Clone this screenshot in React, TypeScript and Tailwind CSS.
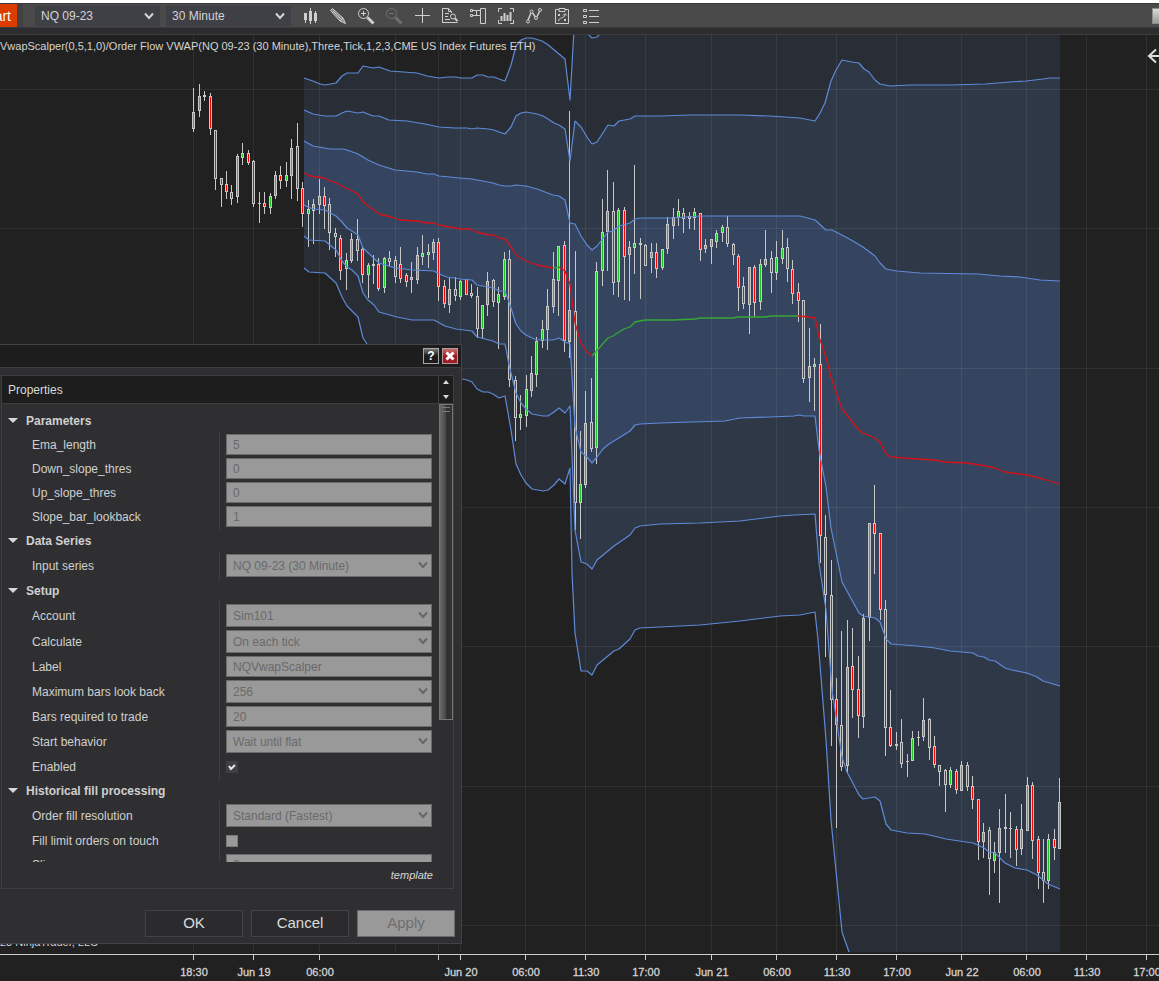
import React, { useState } from "react";

type Point = [number, number];
// high, low, body top, body bottom, rising (1) or falling (0)
type Candle = [number, number, number, number, 0 | 1];

const CANDLES: Candle[] = [
  [88, 132, 112, 129, 1], [84, 117, 96, 111, 1], [91, 101, 95, 97, 1], [93, 135, 96, 129, 0], [130, 190, 130, 179, 0],
  [178, 207, 178, 185, 0], [171, 199, 184, 192, 0], [185, 205, 192, 199, 0], [154, 203, 156, 197, 1], [143, 165, 153, 158, 1],
  [150, 165, 153, 163, 0], [160, 207, 161, 204, 0], [192, 223, 203, 204, 0], [192, 214, 203, 207, 0], [193, 214, 196, 208, 1],
  [171, 199, 175, 196, 1], [166, 189, 175, 181, 0], [162, 187, 175, 181, 1], [139, 199, 148, 176, 1], [123, 201, 146, 189, 0],
  [182, 227, 188, 214, 0], [200, 247, 209, 214, 1], [199, 244, 204, 211, 1], [179, 214, 196, 205, 1], [187, 229, 196, 206, 0],
  [198, 250, 204, 233, 0], [228, 257, 233, 237, 0], [235, 280, 238, 271, 0], [253, 290, 260, 269, 1], [233, 263, 239, 261, 1],
  [219, 261, 239, 251, 0], [247, 283, 249, 275, 0], [263, 298, 265, 275, 1], [255, 284, 264, 266, 1], [258, 291, 264, 289, 0],
  [257, 293, 258, 288, 1], [251, 266, 258, 262, 0], [256, 283, 260, 277, 0], [247, 283, 264, 279, 0], [273, 287, 275, 282, 0],
  [262, 293, 277, 280, 1], [247, 284, 255, 280, 1], [235, 265, 253, 257, 1], [244, 268, 252, 255, 1], [239, 260, 242, 253, 1],
  [238, 301, 242, 287, 0], [280, 308, 286, 304, 0], [277, 313, 289, 305, 1], [277, 301, 289, 296, 0], [280, 300, 281, 297, 1],
  [279, 295, 279, 295, 0], [284, 298, 293, 296, 0], [287, 338, 296, 329, 0], [305, 338, 305, 329, 1], [272, 316, 281, 305, 1],
  [279, 307, 280, 302, 0], [287, 349, 294, 303, 1], [252, 300, 259, 297, 1], [250, 387, 259, 380, 0], [376, 441, 380, 418, 0],
  [395, 430, 414, 418, 1], [375, 427, 389, 416, 1], [356, 397, 373, 391, 1], [337, 387, 341, 375, 1], [320, 348, 329, 341, 1],
  [289, 350, 306, 330, 1], [252, 313, 279, 307, 1], [246, 316, 246, 281, 1], [241, 352, 245, 341, 0], [111, 358, 310, 342, 1],
  [251, 530, 311, 503, 0], [431, 539, 484, 503, 1], [391, 488, 423, 485, 1], [378, 452, 422, 449, 0], [262, 464, 271, 448, 1],
  [199, 286, 232, 271, 1], [170, 271, 211, 232, 1], [182, 295, 211, 283, 0], [208, 297, 210, 282, 1], [207, 300, 210, 257, 0],
  [241, 301, 247, 255, 1], [165, 274, 243, 248, 1], [238, 299, 243, 245, 1], [244, 266, 245, 266, 0], [243, 273, 252, 258, 1],
  [243, 278, 252, 269, 0], [249, 270, 249, 268, 1], [217, 254, 224, 249, 1], [208, 239, 217, 226, 1], [199, 226, 211, 218, 1],
  [208, 233, 213, 219, 0], [212, 229, 216, 219, 1], [208, 230, 212, 218, 1], [213, 261, 213, 250, 0], [239, 253, 245, 249, 1],
  [239, 264, 239, 247, 1], [230, 248, 233, 242, 1], [225, 242, 227, 233, 1], [216, 247, 227, 244, 0], [243, 265, 244, 255, 0],
  [254, 311, 256, 288, 0], [277, 309, 286, 304, 0], [267, 334, 267, 305, 1], [265, 317, 267, 303, 0], [259, 310, 264, 302, 1],
  [230, 267, 259, 265, 1], [251, 293, 258, 273, 0], [241, 280, 257, 273, 1], [230, 264, 248, 259, 1], [238, 282, 247, 269, 0],
  [260, 304, 269, 294, 0], [283, 322, 292, 301, 0], [300, 383, 300, 379, 0], [328, 402, 366, 378, 1], [358, 411, 364, 367, 1],
  [324, 563, 364, 536, 0], [515, 657, 537, 595, 0], [560, 746, 595, 700, 0], [678, 828, 699, 725, 0], [631, 771, 725, 767, 0],
  [620, 773, 667, 766, 1], [628, 718, 666, 690, 0], [656, 738, 689, 716, 0], [614, 728, 618, 717, 1], [523, 641, 523, 618, 1],
  [485, 574, 523, 534, 0], [533, 620, 533, 610, 0], [600, 756, 609, 728, 0], [690, 747, 727, 746, 0], [732, 750, 744, 746, 0],
  [719, 768, 742, 764, 0], [754, 777, 761, 762, 0], [731, 761, 738, 761, 1], [731, 746, 737, 738, 1], [698, 741, 720, 737, 1],
  [718, 760, 719, 748, 0], [736, 768, 746, 765, 0], [765, 786, 765, 772, 0], [769, 812, 770, 785, 0], [767, 788, 770, 785, 1],
  [769, 794, 771, 790, 0], [761, 791, 765, 791, 1], [762, 791, 765, 787, 0], [776, 809, 786, 800, 0], [799, 860, 799, 842, 0],
  [823, 858, 832, 842, 1], [827, 895, 830, 859, 0], [842, 873, 852, 861, 1], [809, 903, 828, 853, 1], [794, 853, 827, 829, 1],
  [812, 858, 828, 829, 0], [826, 866, 829, 850, 0], [804, 855, 829, 849, 1], [777, 831, 785, 831, 1], [782, 859, 785, 841, 0],
  [836, 889, 839, 873, 0], [839, 903, 872, 881, 0], [834, 889, 839, 881, 1], [829, 860, 839, 848, 0], [778, 849, 802, 849, 1],
];

const UPPER3: Point[] = [
  [304, 78], [313, 81], [320, 84], [325, 85], [336, 83], [342, 76], [347, 73], [358, 73], [363, 66], [373, 68], [379, 67], [390, 71], [417, 73],
  [427, 76], [439, 78], [448, 77], [456, 77], [461, 78], [472, 78], [477, 75], [483, 75], [488, 77], [494, 77], [499, 79], [505, 81], [511, 65],
  [516, 46], [521, 40], [526, 38], [532, 38], [542, 41], [547, 44], [565, 59], [570, 100], [574, 30], [576, 10], [585, 30], [589, 35], [592, 38],
  [597, 37], [601, 33], [640, 15], [815, 15], [841, -200], [1060, -200],
];
const UPPER2: Point[] = [
  [304, 110], [313, 114], [325, 116], [336, 116], [342, 113], [347, 111], [358, 113], [363, 112], [373, 116], [379, 116], [389, 120], [407, 121],
  [425, 124], [439, 127], [455, 128], [467, 128], [472, 129], [477, 128], [488, 129], [494, 130], [499, 132], [505, 134], [511, 127], [516, 116],
  [521, 113], [526, 112], [537, 114], [543, 116], [548, 119], [554, 123], [559, 125], [565, 129], [570, 161], [575, 121], [581, 127], [587, 137],
  [592, 144], [597, 142], [608, 125], [614, 126], [619, 121], [630, 119], [635, 116], [660, 116], [690, 115], [740, 115], [770, 116], [800, 118],
  [815, 121], [820, 113], [825, 103], [831, 81], [836, 70], [842, 60], [852, 62], [859, 63], [864, 69], [869, 72], [875, 80], [880, 84], [890, 86],
  [910, 85], [950, 85], [985, 84], [1010, 82], [1026, 81], [1043, 79], [1050, 78], [1060, 78],
];
const UPPER1: Point[] = [
  [304, 141], [313, 146], [330, 149], [343, 149], [347, 150], [358, 154], [368, 160], [379, 165], [395, 170], [417, 172], [427, 174], [434, 174],
  [439, 176], [460, 178], [472, 179], [493, 183], [499, 185], [505, 186], [511, 186], [516, 185], [526, 186], [537, 189], [553, 195], [559, 196],
  [565, 200], [570, 223], [575, 224], [581, 236], [587, 245], [592, 250], [597, 246], [608, 232], [613, 231], [619, 226], [630, 223], [635, 219],
  [640, 218], [672, 218], [700, 216], [800, 216], [815, 220], [826, 230], [832, 230], [840, 234], [853, 241], [863, 247], [875, 256], [880, 263],
  [886, 269], [897, 271], [920, 273], [978, 274], [1000, 276], [1020, 277], [1040, 280], [1060, 281],
];
const LOWER1: Point[] = [
  [304, 205], [308, 207], [313, 209], [325, 210], [336, 216], [342, 222], [347, 228], [358, 235], [363, 248], [379, 263], [395, 268], [413, 270],
  [434, 271], [439, 274], [447, 277], [460, 279], [472, 280], [477, 285], [493, 288], [499, 291], [505, 291], [511, 308], [516, 324], [521, 331],
  [526, 335], [532, 338], [537, 340], [553, 340], [559, 338], [565, 342], [570, 344], [575, 427], [581, 452], [587, 457], [592, 463], [597, 457],
  [603, 449], [609, 444], [622, 436], [630, 431], [635, 425], [640, 424], [660, 423], [725, 421], [740, 418], [770, 417], [794, 416], [799, 415],
  [804, 416], [815, 416], [819, 450], [826, 487], [831, 528], [842, 582], [859, 613], [863, 616], [875, 618], [880, 622], [886, 639], [891, 644],
  [917, 646], [935, 648], [950, 651], [973, 653], [978, 656], [984, 657], [989, 660], [995, 661], [1005, 668], [1012, 670], [1027, 673],
  [1037, 677], [1043, 681], [1060, 686],
];
const LOWER2: Point[] = [
  [304, 236], [309, 240], [325, 241], [336, 250], [342, 261], [347, 267], [352, 270], [358, 276], [363, 293], [368, 300], [374, 305], [379, 312],
  [397, 317], [412, 320], [434, 320], [445, 326], [456, 329], [472, 331], [477, 337], [493, 341], [499, 344], [505, 344], [509, 365], [516, 393],
  [521, 403], [526, 409], [532, 414], [543, 416], [548, 416], [554, 412], [559, 408], [565, 413], [570, 406], [575, 530], [581, 562], [587, 564],
  [592, 569], [597, 560], [614, 546], [630, 535], [635, 528], [640, 526], [660, 524], [700, 523], [740, 521], [780, 516], [795, 515], [815, 514],
  [819, 563], [826, 610], [832, 690], [842, 757], [847, 772], [859, 795], [863, 799], [875, 797], [880, 801], [886, 824], [891, 830], [907, 833],
  [925, 834], [938, 837], [946, 839], [973, 843], [984, 848], [989, 852], [995, 853], [1005, 863], [1015, 868], [1027, 870], [1037, 875],
  [1048, 884], [1060, 889],
];
const LOWER3: Point[] = [
  [304, 268], [309, 272], [325, 273], [336, 283], [342, 297], [347, 306], [358, 317], [363, 338], [367, 344], [379, 360], [412, 370], [440, 371],
  [462, 379], [467, 380], [472, 382], [477, 389], [483, 392], [488, 392], [493, 394], [499, 398], [505, 396], [511, 430], [516, 464], [521, 475],
  [526, 483], [532, 489], [543, 491], [548, 490], [554, 485], [559, 479], [565, 484], [570, 468], [572, 573], [575, 633], [581, 671], [587, 671],
  [592, 675], [597, 665], [614, 651], [619, 649], [630, 639], [635, 630], [640, 628], [660, 627], [700, 625], [740, 621], [780, 616], [800, 615],
  [815, 612], [818, 640], [826, 740], [831, 820], [842, 932], [849, 952], [860, 990], [1060, 1090],
];

const VWAP_FALL1: Point[] = [
  [304, 173], [310, 176], [324, 178], [336, 183], [342, 186], [352, 191], [358, 194], [363, 202], [368, 206], [374, 210], [379, 214], [391, 217],
  [400, 220], [417, 221], [427, 223], [434, 223], [439, 225], [460, 229], [470, 229], [477, 232], [488, 235], [494, 235], [499, 238], [505, 239],
  [511, 247], [516, 255], [526, 261], [537, 265], [553, 268],
];
const VWAP_FLAT: Point[] = [[553, 268], [559, 267]];
const VWAP_FALL2: Point[] = [[559, 267], [565, 271], [570, 284], [575, 323], [581, 343], [587, 352], [592, 356]];
const VWAP_RISE: Point[] = [
  [592, 356], [608, 338], [613, 336], [619, 332], [624, 329], [630, 327], [635, 322], [645, 320], [673, 320], [695, 319], [700, 318], [733, 318],
  [738, 317], [765, 317], [771, 316], [798, 316],
];
const VWAP_FALL3: Point[] = [
  [798, 316], [809, 317], [815, 318], [819, 337], [826, 357], [831, 377], [842, 409], [859, 430], [863, 433], [875, 438], [880, 442], [886, 454],
  [891, 457], [917, 459], [935, 460], [945, 462], [967, 463], [980, 465], [995, 468], [1005, 472], [1027, 475], [1043, 479], [1060, 484],
];

const V_LINES = [193, 253, 319, 395, 438, 460, 525, 585, 645, 711, 776, 836, 896, 961, 1026, 1086, 1146];
const H_LINES = [89, 228, 368, 507, 646, 786, 925];

const TIME_LABELS: [number, string][] = [
  [194, "18:30"], [254, "Jun 19"], [320, "06:00"], [461, "Jun 20"], [526, "06:00"], [586, "11:30"], [646, "17:00"], [712, "Jun 21"],
  [777, "06:00"], [837, "11:30"], [897, "17:00"], [962, "Jun 22"], [1027, "06:00"], [1087, "11:30"], [1147, "17:00"],
];

const toPoints = (pts: Point[]) => pts.map((p) => p.join(",")).join(" ");
const bandPoints = (upper: Point[], lower: Point[]) => toPoints([...upper, ...[...lower].reverse()]);
const candleX = (index: number) => Math.round(193.3 + index * 5.4466);

const PriceChart = () => (
  <svg viewBox="0 35 1159 946" className="block h-auto w-full" role="img" aria-label="NQ 09-23 price chart">
    <defs>
      <clipPath id="plot">
        <rect x="0" y="35" width="1159" height="917" />
      </clipPath>
    </defs>
    <rect x="0" y="35" width="1159" height="946" fill="#212121" />
    <g clipPath="url(#plot)">
      <polygon points={bandPoints(UPPER3, LOWER3)} fill="#292d35" />
      <polygon points={bandPoints(UPPER2, LOWER2)} fill="#2f3847" />
      <polygon points={bandPoints(UPPER1, LOWER1)} fill="#35455f" />
      <g fill="#ffffff" fillOpacity="0.07" shapeRendering="crispEdges">
        {V_LINES.map((x) => (
          <rect key={x} x={x} y="35" width="1" height="917" />
        ))}
        {H_LINES.map((y) => (
          <rect key={y} x="0" y={y} width="1159" height="1" />
        ))}
      </g>
      <g shapeRendering="crispEdges">
        {CANDLES.map(([high, low, top, bottom, up], i) => {
          const x = candleX(i);
          return (
            <g key={i}>
              <rect x={x} y={high} width="1" height={low - high} fill="#c8c8c8" />
              <rect x={x - 1} y={top} width="3" height={bottom - top} fill="#c8c8c8" />
              {bottom - top > 2 && (
                <rect x={x} y={top + 1} width="1" height={bottom - top - 2} fill={up ? "#1fc41f" : "#ff0000"} />
              )}
            </g>
          );
        })}
      </g>
      <g fill="none" stroke="#5f8ad8" strokeWidth="1.2" strokeLinejoin="round">
        {[UPPER3, UPPER2, UPPER1, LOWER1, LOWER2, LOWER3].map((line, i) => (
          <polyline key={i} points={toPoints(line)} />
        ))}
      </g>
      <g fill="none" strokeWidth="1.3" strokeLinejoin="round">
        {[VWAP_FALL1, VWAP_FALL2, VWAP_FALL3].map((line, i) => (
          <polyline key={i} points={toPoints(line)} stroke="#d41218" />
        ))}
        <polyline points={toPoints(VWAP_FLAT)} stroke="#36a836" />
        <polyline points={toPoints(VWAP_RISE)} stroke="#36a836" />
      </g>
    </g>
    <g fill="#d0d0d0" shapeRendering="crispEdges">
      <rect x="0" y="954" width="1159" height="1" />
      {V_LINES.filter((x) => x !== 395).map((x) => (
        <rect key={x} x={x} y="955" width="1" height="5" />
      ))}
    </g>
    <g fill="#d4d4d4" fontFamily="'Liberation Sans', Arial, sans-serif" fontSize="11">
      <text x="0" y="50">
        VwapScalper(0,5,1,0)/Order Flow VWAP(NQ 09-23 (30 Minute),Three,Tick,1,2,3,CME US Index Futures ETH)
      </text>
      <text x="0" y="946">
        23 NinjaTrader, LLC
      </text>
      {TIME_LABELS.map(([x, text]) => (
        <text key={x} x={x} y="976" textAnchor="middle" stroke="#d4d4d4" strokeWidth="0.3">
          {text}
        </text>
      ))}
    </g>
    <path d="M1159 56h-9.500M1156 49.500l-7 6.500 7 6.500" fill="none" stroke="#dcdcdc" strokeWidth="2" />
  </svg>
);

const Chevron = ({ className }: { className: string }) => (
  <svg viewBox="0 0 10 8" className={`pointer-events-none h-2 w-2.5 ${className}`} aria-hidden="true">
    <path d="M1 1.500l4 4.500 4-4.500" fill="none" stroke="currentColor" strokeWidth="2" />
  </svg>
);

interface ToolIcon {
  label: string;
  dim?: boolean;
  icon: React.ReactNode;
}

const TOOLS: ToolIcon[] = [
  {
    label: "Bar type",
    icon: (
      <g fill="currentColor" stroke="none">
        <path d="M4 7h3v7H4zM5 14h1v3H5zM9 5h3v10H9zM10 2h1v16h-1zM14 7h3v8h-3zM15 5h1v12h-1z" />
      </g>
    ),
  },
  {
    label: "Drawing tools",
    icon: (
      <>
        <path d="M2.500 4.500l2-2L15 12l2.500 5.500L12 15z" fill="currentColor" fillOpacity="0.45" />
        <path d="M4.500 6.500l2-2M5 5l9.500 9.500M12 15l3-3" />
      </>
    ),
  },
  {
    label: "Zoom in",
    icon: (
      <>
        <circle cx="7.500" cy="7.500" r="5" />
        <path d="M5 7.500h5M7.500 5v5" />
        <path d="M11.500 11.500l6 6" strokeWidth="3" />
      </>
    ),
  },
  {
    label: "Zoom out",
    dim: true,
    icon: (
      <>
        <circle cx="7.500" cy="7.500" r="5" />
        <path d="M5 7.500h5" />
        <path d="M11.500 11.500l6 6" strokeWidth="3" />
      </>
    ),
  },
  { label: "Cross hair", icon: <path d="M3 9.500h15M10.500 2v15" /> },
  {
    label: "Data box",
    icon: (
      <>
        <path d="M11 16.500H2.500v-14h6l3 3v1.500M8.500 2.500v3h3M2.500 16.500h15M5 7.500h4M5 10.500h3M5 13.500h5" />
        <circle cx="13" cy="10.500" r="2.500" />
        <path d="M15 12.500l2.500 2.500" strokeWidth="2" />
      </>
    ),
  },
  {
    label: "Chart trader",
    icon: <path d="M2.500 3.500h2v2h-2zM2.500 8.500h2v2h-2zM4.500 4.500h8M4.500 9.500h8M8.500 4.500v5M12.500 2.500h5v15h-5z" />,
  },
  {
    label: "Data series",
    icon: (
      <>
        <path d="M6 2.500H2.500V6M14 2.500h3.500V6M6 17.500H2.500V14M14 17.500h3.500V14" />
        <path d="M5.500 10v5M8.500 7v8M11.500 9v6M14.500 6v9" strokeWidth="2" />
      </>
    ),
  },
  {
    label: "Indicators",
    icon: (
      <>
        <path d="M4 14l3-7M8.500 7l3 4M13 10.500l2.500-5" strokeWidth="1.500" />
        <circle cx="4" cy="15.500" r="1.500" />
        <circle cx="7.500" cy="5.500" r="1.500" />
        <circle cx="12" cy="12" r="1.500" />
        <circle cx="16" cy="4" r="1.500" />
      </>
    ),
  },
  {
    label: "Strategies",
    icon: (
      <>
        <path d="M7 3.500H3.500v14h13v-14H13M7 2.500h6v3H7z" />
        <path d="M6 8l2 2M8 8l-2 2M12 13l2 2M14 13l-2 2M6.500 15c0-4 6-2 6.500-6.500M11 9.500l2-2 1.500 2" />
      </>
    ),
  },
  {
    label: "Properties",
    icon: <path d="M3.500 3.500h3v2h-3zM3.500 9.500h3v2h-3zM3.500 15.500h3v2h-3zM9 4.500h10M9 10.500h10M9 16.500h10" />,
  },
];

const ToolbarSelect = ({ label, value, options }: { label: string; value: string; options: string[] }) => {
  const [selected, setSelected] = useState(value);

  return (
    <div className="relative w-[125px]">
      <select
        aria-label={label}
        value={selected}
        onChange={(e) => setSelected(e.target.value)}
        className="block h-5 w-full appearance-none bg-[#3f3f46] pl-1.5 text-xs text-[#d4d4d4] outline-none"
      >
        {options.map((option) => (
          <option key={option}>{option}</option>
        ))}
      </select>
      <Chevron className="absolute top-1.5 right-1.5 text-[#d4d4d4]" />
    </div>
  );
};

const Toolbar = () => (
  <header className="flex h-[35px] flex-col border-t-3 border-white bg-[#2d2d30]">
    <div className="flex h-[25px] items-center border-y border-[#3a3a3a] bg-[#4a4a4a]">
      <button className="flex h-full w-[17px] items-center justify-end overflow-hidden bg-[#dc3c00] pr-1.5 text-sm text-white">
        art
      </button>
      <div className="mr-3 h-full w-1.5 bg-[#414141]" />
      <div className="flex gap-1.5">
        <ToolbarSelect label="Instrument" value="NQ 09-23" options={["NQ 09-23", "ES 09-23"]} />
        <ToolbarSelect label="Interval" value="30 Minute" options={["30 Minute", "60 Minute"]} />
      </div>
      <div className="ml-[9px] flex gap-2">
        {TOOLS.map((tool) => (
          <button key={tool.label} aria-label={tool.label} className={tool.dim ? "text-[#707070]" : "text-[#cfcfcf]"}>
            <svg viewBox="0 0 20 20" className="block size-5" fill="none" stroke="currentColor">
              {tool.icon}
            </svg>
          </button>
        ))}
      </div>
      <button
        aria-label="Window"
        className="ml-auto h-4 w-[7px] border border-r-0 border-[#8c8c8c] bg-linear-to-b from-[#d8d8d8] to-[#9c9c9c]"
      />
    </div>
    <div className="grow border-b border-[#3c3c3e]" />
  </header>
);

type Field = { label: string; value: string; kind: "text" | "select" | "check" };

const GROUPS: { title: string; fields: Field[] }[] = [
  {
    title: "Parameters",
    fields: [
      { label: "Ema_length", value: "5", kind: "text" },
      { label: "Down_slope_thres", value: "0", kind: "text" },
      { label: "Up_slope_thres", value: "0", kind: "text" },
      { label: "Slope_bar_lookback", value: "1", kind: "text" },
    ],
  },
  {
    title: "Data Series",
    fields: [{ label: "Input series", value: "NQ 09-23 (30 Minute)", kind: "select" }],
  },
  {
    title: "Setup",
    fields: [
      { label: "Account", value: "Sim101", kind: "select" },
      { label: "Calculate", value: "On each tick", kind: "select" },
      { label: "Label", value: "NQVwapScalper", kind: "text" },
      { label: "Maximum bars look back", value: "256", kind: "select" },
      { label: "Bars required to trade", value: "20", kind: "text" },
      { label: "Start behavior", value: "Wait until flat", kind: "select" },
      { label: "Enabled", value: "on", kind: "check" },
    ],
  },
  {
    title: "Historical fill processing",
    fields: [
      { label: "Order fill resolution", value: "Standard (Fastest)", kind: "select" },
      { label: "Fill limit orders on touch", value: "", kind: "check" },
      { label: "Slippage", value: "0", kind: "text" },
    ],
  },
];

const FieldControl = ({ field, id }: { field: Field; id: string }) => {
  const [checked, setChecked] = useState(field.value === "on");

  if (field.kind === "check") {
    return (
      <div className="flex h-[21px] items-center">
        <div className="relative size-3">
          <input
            id={id}
            type="checkbox"
            checked={checked}
            onChange={(e) => setChecked(e.target.checked)}
            className="block size-3 appearance-none border border-[#7a7a7a] bg-[#999999] checked:border-[#3f3f46] checked:bg-[#3f3f46]"
          />
          {checked && (
            <svg viewBox="0 0 12 12" className="pointer-events-none absolute inset-0 size-3">
              <path d="M3 5l2 3 4-4" fill="none" stroke="#e8e8e8" strokeWidth="2" />
            </svg>
          )}
        </div>
      </div>
    );
  }

  if (field.kind === "select") {
    return (
      <div className="relative">
        <select
          id={id}
          disabled
          defaultValue={field.value}
          className="block h-[23px] w-full appearance-none border border-[#6a6a6a] bg-[#999999] pl-1.5 text-[#6a6a6a] opacity-100"
        >
          <option>{field.value}</option>
        </select>
        <Chevron className="absolute top-[7px] right-1 text-[#666666]" />
      </div>
    );
  }

  return (
    <input
      id={id}
      type="text"
      disabled
      defaultValue={field.value}
      className="block h-[21px] w-full border border-[#6a6a6a] bg-[#999999] pl-1.5 text-[#6a6a6a]"
    />
  );
};

const PropertyGrid = () => (
  <div className="h-[458px] overflow-hidden pt-1.5 text-xs text-[#d0d0d0]">
    {GROUPS.map((group) => (
      <section key={group.title}>
        <button className="flex h-[21px] items-center gap-2 pl-1.5 font-bold">
          <svg viewBox="0 0 10 6" className="h-1.5 w-2.5">
            <path d="M0 0h10L5 5z" fill="#d8d8d8" />
          </svg>
          {group.title}
        </button>
        <div className="flex flex-col">
          {group.fields.map((field) => {
            const id = field.label.toLowerCase().replace(/\s/g, "-");
            return (
              <div key={id} className="group flex">
                <label
                  htmlFor={id}
                  className="flex w-[218px] shrink-0 items-center border-r border-[#3f3f42] pt-[3px] pl-[30px] group-last:pb-[3px]"
                >
                  {field.label}
                </label>
                <div className="mr-[7px] grow pt-[3px] pl-1.5 group-last:pb-[3px]">
                  <FieldControl field={field} id={id} />
                </div>
              </div>
            );
          })}
        </div>
      </section>
    ))}
  </div>
);

const PropertiesDialog = () => (
  <div
    role="dialog"
    aria-label="Properties"
    className="absolute top-[309px] left-0 w-[462px] border border-l-0 border-[#434346] bg-[#2f2f31]"
  >
    <div className="flex h-[23px] items-center justify-end gap-[3px] border-b border-[#3f3f42] bg-[#1d1d1d] pr-[3px]">
      <button
        aria-label="Help"
        className="flex size-4 items-center justify-center border border-[#a8a8a8] bg-linear-to-b from-[#777777] to-[#1d1d1d] to-50% text-xs font-bold text-white"
      >
        ?
      </button>
      <button aria-label="Close" className="size-4 border border-[#b09a9a] bg-linear-to-b from-[#c86a6a] to-[#a01c24] to-50%">
        <svg viewBox="0 0 14 14" className="block">
          <path d="M3.500 3.500l7 7M10.500 3.500l-7 7" stroke="#ffffff" strokeWidth="3" />
        </svg>
      </button>
    </div>

    <div className="mt-[7px] mr-[7px] ml-px border border-[#3f3f42]">
      <div className="flex h-7 border-b border-[#3f3f42] bg-[#1d1d1d]">
        <h2 className="flex grow items-center pl-1.5 text-xs text-[#d8d8d8]">Properties</h2>
        <div className="flex w-[15px] flex-col justify-between border-l border-[#3f3f42] py-1">
          <button aria-label="Scroll up" className="flex justify-center">
            <svg viewBox="0 0 6 4" className="h-1 w-1.5">
              <path d="M0 4h6L3 0z" fill="#d8d8d8" />
            </svg>
          </button>
          <button aria-label="Scroll down" className="flex justify-center">
            <svg viewBox="0 0 6 4" className="h-1 w-1.5">
              <path d="M0 0h6L3 4z" fill="#d8d8d8" />
            </svg>
          </button>
        </div>
      </div>
      <div className="flex">
        <div className="grow">
          <PropertyGrid />
          <div className="flex h-[26px] items-center justify-end pr-1.5">
            <a href="#template" className="text-[11px] text-[#d8d8d8] italic">
              template
            </a>
          </div>
        </div>
        <div className="w-3.5 bg-[#2d2d2f]">
          <div className="flex h-[316px] flex-col gap-[3px] border border-[#77777a] bg-linear-to-r from-[#6a6a6a] from-0% via-[#474747] via-50% to-[#313131] to-50% pt-[2px]">
            <div className="mx-0.5 h-px bg-[#7c7c7c]" />
            <div className="mx-0.5 h-px bg-[#7c7c7c]" />
          </div>
        </div>
      </div>
    </div>

    <div className="mt-[21px] mr-1.5 mb-1.5 flex justify-end gap-2 text-[15px]">
      <button className="h-[27px] w-[98px] border border-[#434346] bg-[#2b2b2d] text-[#dcdcdc]">OK</button>
      <button className="h-[27px] w-[98px] border border-[#434346] bg-[#2b2b2d] text-[#dcdcdc]">Cancel</button>
      <button disabled className="h-[27px] w-[98px] border border-[#6a6a6a] bg-[#999999] text-[#6e6e6e]">
        Apply
      </button>
    </div>
  </div>
);

const App: React.FC = () => {
  return (
    <div className="min-h-screen bg-[#212121] font-['Liberation_Sans',Arial,sans-serif]">
      <Toolbar />
      <main className="relative overflow-hidden">
        <PriceChart />
        <PropertiesDialog />
      </main>
    </div>
  );
};

export default App;
